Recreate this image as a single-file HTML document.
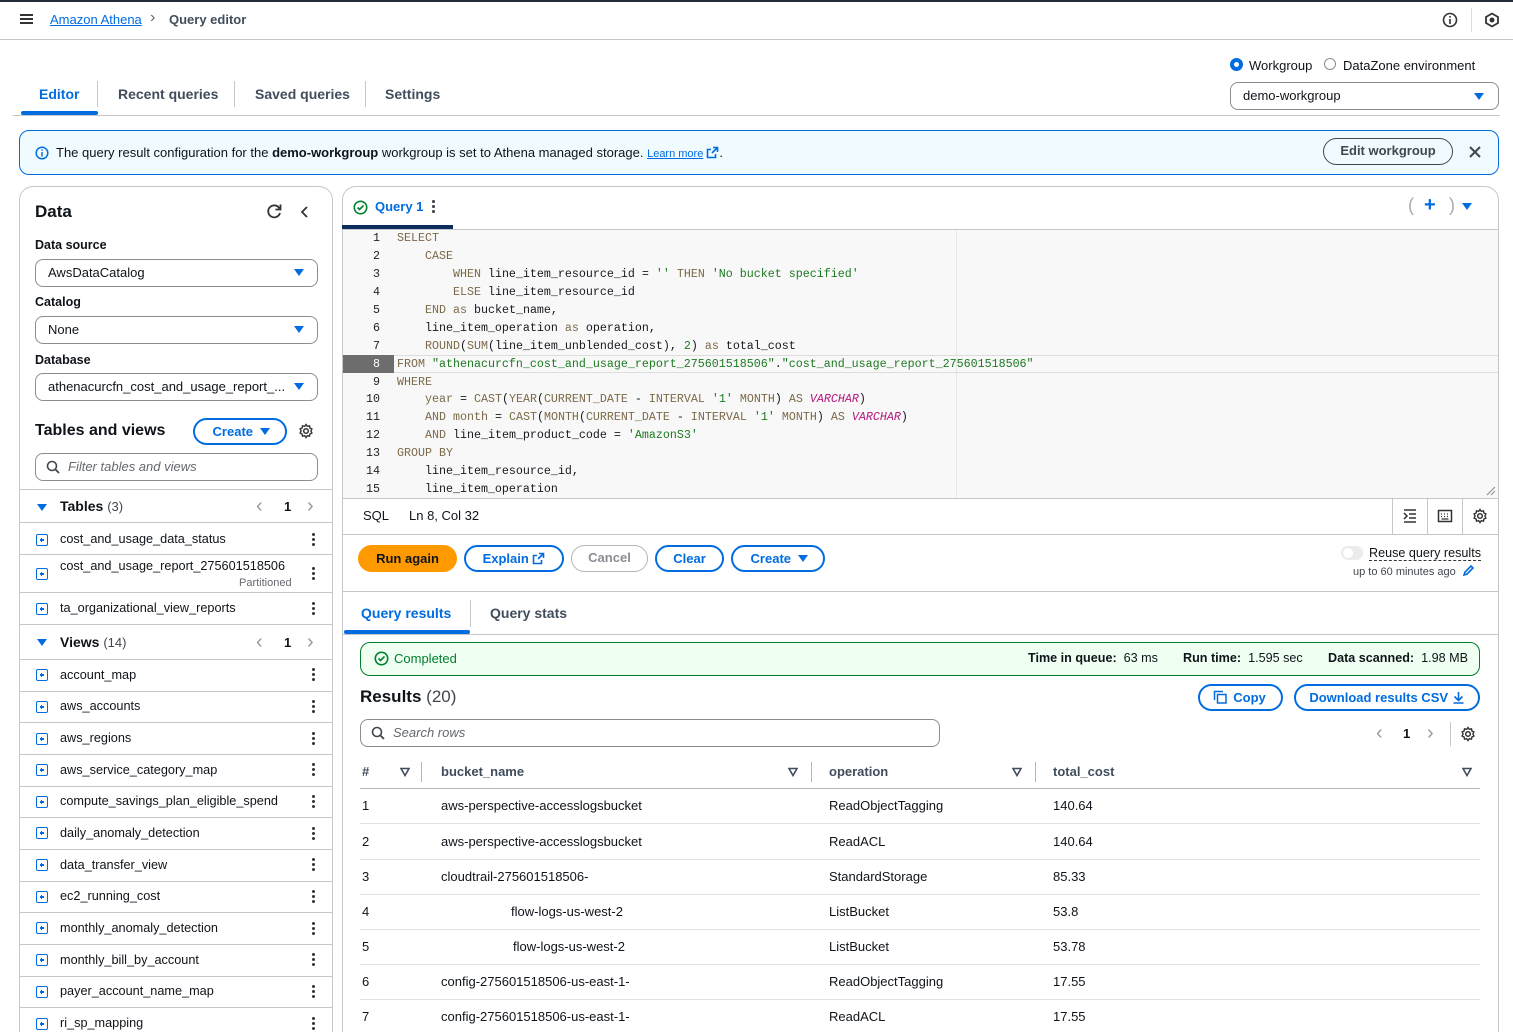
<!DOCTYPE html>
<html style="overflow:hidden;width:1513px;height:1032px"><head><meta charset="utf-8"><style>
*{box-sizing:border-box;margin:0;padding:0}
body{width:1513px;height:1032px;overflow:hidden;background:#fff;font-family:"Liberation Sans",sans-serif;font-size:13px;color:#0f141a;position:relative}
.a{position:absolute;white-space:nowrap}
.b{font-weight:bold}
.blue{color:#006ce0}
.sel{position:absolute;border:1px solid #8c8c94;border-radius:8px;background:#fff;height:28px;padding:0 12px;line-height:26px;font-size:13px}
.tri{position:absolute;width:0;height:0;border-left:5px solid transparent;border-right:5px solid transparent;border-top:7px solid #006ce0}
.btn{position:absolute;border:2px solid #006ce0;border-radius:20px;color:#006ce0;font-weight:bold;text-align:center;font-size:13px;background:#fff}
.hl{position:absolute;height:1px;background:#c6c6cd}
.vl{position:absolute;width:1px;background:#c6c6cd}
.code{position:absolute;left:397px;top:230px;font-family:"Liberation Mono",monospace;font-size:11.67px;line-height:17.93px;color:#16191f;white-space:pre}
.ln{position:absolute;left:344px;width:36px;top:230px;font-family:"Liberation Mono",monospace;font-size:11.67px;line-height:17.93px;text-align:right;white-space:pre;color:#222}
.k{color:#7b6a48}.s{color:#1d7a22}.v{color:#b5167a;font-style:italic}
.plus{position:absolute;left:36px;width:12px;height:12px;border:1.5px solid #006ce0;border-radius:2px}
.plus:before{content:"";position:absolute;left:2.5px;top:4.2px;width:4px;height:1.5px;background:#006ce0}
.plus:after{content:"";position:absolute;left:3.7px;top:3px;width:1.5px;height:4px;background:#006ce0}
.dots{position:absolute;left:312px;width:3px}
.dots i{display:block;width:3px;height:3px;border-radius:50%;background:#333;margin-bottom:2px}
.row{position:absolute;left:60px;font-size:12.7px}
.td{position:absolute;font-size:13px}
.pg{position:absolute;color:#9a9a9a;font-size:20px;line-height:20px}
</style></head><body>
<div class="a" style="left:0;top:0;width:1513px;height:2px;background:#232b37"></div>
<div class="a" style="left:20px;top:14px;width:13px;height:2px;background:#333;box-shadow:0 4px 0 #333,0 8px 0 #333"></div>
<div class="a blue" style="left:50px;top:12px;font-size:13px;text-decoration:underline">Amazon Athena</div>
<div class="a" style="left:150px;top:9px;color:#666;font-size:16px">›</div>
<div class="a" style="left:169px;top:12px;font-size:13px;font-weight:bold;color:#414d5c">Query editor</div>
<svg class="a" style="left:1442px;top:12px" width="16" height="16"><circle cx="8" cy="8" r="6.5" fill="none" stroke="#333" stroke-width="1.6"/><rect x="7.2" y="7" width="1.6" height="5" fill="#333"/><rect x="7.2" y="4" width="1.6" height="1.6" fill="#333"/></svg>
<div class="a" style="left:1471px;top:8px;width:1px;height:24px;background:#ddd"></div>
<svg class="a" style="left:1484px;top:12px" width="16" height="16"><polygon points="8,1.5 14,5 14,11 8,14.5 2,11 2,5" fill="none" stroke="#333" stroke-width="1.8"/><circle cx="8" cy="8" r="2.5" fill="#333"/></svg>
<div class="hl" style="left:0;top:39px;width:1513px"></div>
<div class="a b blue" style="left:39px;top:86px;font-size:14px">Editor</div>
<div class="a" style="left:21px;top:111px;width:77px;height:4px;background:#006ce0;border-radius:2px"></div>
<div class="vl" style="left:97px;top:81px;height:26px"></div>
<div class="a b" style="left:118px;top:86px;font-size:14px;color:#414d5c">Recent queries</div>
<div class="vl" style="left:234px;top:81px;height:26px"></div>
<div class="a b" style="left:255px;top:86px;font-size:14px;color:#414d5c">Saved queries</div>
<div class="vl" style="left:365px;top:81px;height:26px"></div>
<div class="a b" style="left:385px;top:86px;font-size:14px;color:#414d5c">Settings</div>
<div class="hl" style="left:13px;top:115px;width:1487px"></div>
<div class="a" style="left:1230px;top:58px;width:13px;height:13px;border-radius:50%;border:4px solid #006ce0"></div>
<div class="a" style="left:1249px;top:58px;font-size:13px">Workgroup</div>
<div class="a" style="left:1324px;top:58px;width:12px;height:12px;border-radius:50%;border:1.5px solid #8c8c94"></div>
<div class="a" style="left:1343px;top:58px;font-size:13px">DataZone environment</div>
<div class="sel" style="left:1230px;top:82px;width:269px">demo-workgroup</div>
<div class="tri" style="left:1474px;top:93px"></div>
<div class="a" style="left:19px;top:130px;width:1480px;height:45px;border:1px solid #006ce0;border-radius:10px;background:#f0fbff"></div>
<svg class="a" style="left:35px;top:146px" width="14" height="14"><circle cx="7" cy="7" r="5.8" fill="none" stroke="#006ce0" stroke-width="1.5"/><rect x="6.3" y="6" width="1.4" height="4.5" fill="#006ce0"/><rect x="6.3" y="3.3" width="1.4" height="1.4" fill="#006ce0"/></svg>
<div class="a" style="left:56px;top:145px;font-size:13px">The query result configuration for the <b>demo-workgroup</b> workgroup is set to Athena managed storage. <span class="blue" style="font-size:11px;text-decoration:underline">Learn more</span><svg width="13" height="13" style="vertical-align:-2px;margin-left:3px"><path d="M7 1.5h4.5V6M11.5 1.5L6 7M9.5 8v3.5h-8v-8H5" fill="none" stroke="#006ce0" stroke-width="1.6"/></svg>.</div>
<div class="a" style="left:1323px;top:138px;width:130px;height:27px;border:1.5px solid #424650;border-radius:14px;text-align:center;line-height:24px;font-weight:bold;color:#424650;font-size:13px">Edit workgroup</div>
<svg class="a" style="left:1468px;top:145px" width="14" height="14"><path d="M2 2L12 12M12 2L2 12" stroke="#424650" stroke-width="2"/></svg>
<div class="a" style="left:19px;top:186px;width:314px;height:880px;border:1px solid #c6c6cd;border-radius:14px"></div>
<div class="a b" style="left:35px;top:202px;font-size:17px">Data</div>
<svg class="a" style="left:266px;top:203px" width="17" height="17"><path d="M13.5 5.5A6 6 0 1 0 14 10" fill="none" stroke="#333" stroke-width="1.8"/><path d="M14.5 1.5v5h-5" fill="none" stroke="#333" stroke-width="1.8"/></svg>
<svg class="a" style="left:300px;top:205px" width="10" height="14"><path d="M7 2L2 7l5 5" fill="none" stroke="#333" stroke-width="1.8"/></svg>
<div class="a b" style="left:35px;top:238px;font-size:12.5px">Data source</div>
<div class="sel" style="left:35px;top:259px;width:283px">AwsDataCatalog</div><div class="tri" style="left:294px;top:269px"></div>
<div class="a b" style="left:35px;top:295px;font-size:12.5px">Catalog</div>
<div class="sel" style="left:35px;top:316px;width:283px">None</div><div class="tri" style="left:294px;top:326px"></div>
<div class="a b" style="left:35px;top:353px;font-size:12.5px">Database</div>
<div class="sel" style="left:35px;top:373px;width:283px">athenacurcfn_cost_and_usage_report_...</div><div class="tri" style="left:294px;top:383px"></div>
<div class="a b" style="left:35px;top:422px;font-size:16px">Tables and views</div>
<div class="btn" style="left:193px;top:418px;width:94px;height:27px;line-height:23px">Create&nbsp;&nbsp;&nbsp;&nbsp;</div><div class="tri" style="left:260px;top:428px"></div>
<svg class="a" style="left:298px;top:423px" width="16" height="16"><circle cx="8" cy="8" r="2.3" fill="none" stroke="#333" stroke-width="1.5"/><path d="M8 1.5l1.3 1.8 2.2-.5.4 2.2 2 1-1 2 1 2-2 1-.4 2.2-2.2-.5L8 14.5l-1.3-1.8-2.2.5-.4-2.2-2-1 1-2-1-2 2-1 .4-2.2 2.2.5z" fill="none" stroke="#333" stroke-width="1.4"/></svg>
<div class="sel" style="left:35px;top:453px;width:283px;padding-left:32px;font-style:italic;color:#656871">Filter tables and views</div>
<svg class="a" style="left:46px;top:460px" width="14" height="14"><circle cx="6" cy="6" r="4.5" fill="none" stroke="#424650" stroke-width="1.6"/><path d="M9.5 9.5L13 13" stroke="#424650" stroke-width="1.8"/></svg>
<div class="hl" style="left:20px;top:489px;width:312px"></div>
<div class="tri" style="left:37px;top:504px"></div>
<div class="a" style="left:60px;top:498px;font-size:14px"><b>Tables</b> <span style="color:#424650;font-size:13px">(3)</span></div>
<div class="pg" style="left:256px;top:496px">‹</div><div class="a b" style="left:284px;top:499px">1</div><div class="pg" style="left:307px;top:496px">›</div>
<div class="hl" style="left:20px;top:522px;width:312px"></div>
<div class="plus" style="top:534px"></div><div class="row" style="top:532px">cost_and_usage_data_status</div><div class="dots" style="top:533px"><i></i><i></i><i></i></div>
<div class="hl" style="left:20px;top:554px;width:312px"></div>
<div class="plus" style="top:568px"></div><div class="row" style="top:559px">cost_and_usage_report_275601518506</div><div class="a" style="left:239px;top:577px;font-size:11px;color:#656871">Partitioned</div><div class="dots" style="top:567px"><i></i><i></i><i></i></div>
<div class="hl" style="left:20px;top:592px;width:312px"></div>
<div class="plus" style="top:603px"></div><div class="row" style="top:601px">ta_organizational_view_reports</div><div class="dots" style="top:602px"><i></i><i></i><i></i></div>
<div class="hl" style="left:20px;top:624px;width:312px"></div>
<div class="tri" style="left:37px;top:639px"></div>
<div class="a" style="left:60px;top:634px;font-size:14px"><b>Views</b> <span style="color:#424650;font-size:13px">(14)</span></div>
<div class="pg" style="left:256px;top:632px">‹</div><div class="a b" style="left:284px;top:635px">1</div><div class="pg" style="left:307px;top:632px">›</div>
<div class="hl" style="left:20px;top:659px;width:312px"></div>
<div class="plus" style="top:669px"></div><div class="row" style="top:668px">account_map</div><div class="dots" style="top:668px"><i></i><i></i><i></i></div><div class="hl" style="left:20px;top:691px;width:312px"></div>
<div class="plus" style="top:701px"></div><div class="row" style="top:699px">aws_accounts</div><div class="dots" style="top:700px"><i></i><i></i><i></i></div><div class="hl" style="left:20px;top:722px;width:312px"></div>
<div class="plus" style="top:733px"></div><div class="row" style="top:731px">aws_regions</div><div class="dots" style="top:732px"><i></i><i></i><i></i></div><div class="hl" style="left:20px;top:754px;width:312px"></div>
<div class="plus" style="top:764px"></div><div class="row" style="top:763px">aws_service_category_map</div><div class="dots" style="top:763px"><i></i><i></i><i></i></div><div class="hl" style="left:20px;top:786px;width:312px"></div>
<div class="plus" style="top:796px"></div><div class="row" style="top:794px">compute_savings_plan_eligible_spend</div><div class="dots" style="top:795px"><i></i><i></i><i></i></div><div class="hl" style="left:20px;top:817px;width:312px"></div>
<div class="plus" style="top:827px"></div><div class="row" style="top:826px">daily_anomaly_detection</div><div class="dots" style="top:827px"><i></i><i></i><i></i></div><div class="hl" style="left:20px;top:849px;width:312px"></div>
<div class="plus" style="top:859px"></div><div class="row" style="top:858px">data_transfer_view</div><div class="dots" style="top:858px"><i></i><i></i><i></i></div><div class="hl" style="left:20px;top:881px;width:312px"></div>
<div class="plus" style="top:891px"></div><div class="row" style="top:889px">ec2_running_cost</div><div class="dots" style="top:890px"><i></i><i></i><i></i></div><div class="hl" style="left:20px;top:912px;width:312px"></div>
<div class="plus" style="top:922px"></div><div class="row" style="top:921px">monthly_anomaly_detection</div><div class="dots" style="top:922px"><i></i><i></i><i></i></div><div class="hl" style="left:20px;top:944px;width:312px"></div>
<div class="plus" style="top:954px"></div><div class="row" style="top:953px">monthly_bill_by_account</div><div class="dots" style="top:953px"><i></i><i></i><i></i></div><div class="hl" style="left:20px;top:976px;width:312px"></div>
<div class="plus" style="top:986px"></div><div class="row" style="top:984px">payer_account_name_map</div><div class="dots" style="top:985px"><i></i><i></i><i></i></div><div class="hl" style="left:20px;top:1007px;width:312px"></div>
<div class="plus" style="top:1018px"></div><div class="row" style="top:1016px">ri_sp_mapping</div><div class="dots" style="top:1017px"><i></i><i></i><i></i></div>
<div class="a" style="left:342px;top:186px;width:1157px;height:880px;border:1px solid #c6c6cd;border-radius:14px"></div>
<svg class="a" style="left:353px;top:200px" width="15" height="15"><circle cx="7.5" cy="7.5" r="6.2" fill="none" stroke="#00802f" stroke-width="1.6"/><path d="M4.5 7.5l2 2 4-4" fill="none" stroke="#00802f" stroke-width="1.6"/></svg>
<div class="a b blue" style="left:375px;top:199px;font-size:13px">Query 1</div>
<div class="a" style="left:432px;top:200px;width:3px"><i style="display:block;width:2.5px;height:2.5px;background:#424650;border-radius:50%;margin-bottom:2.5px"></i><i style="display:block;width:2.5px;height:2.5px;background:#424650;border-radius:50%;margin-bottom:2.5px"></i><i style="display:block;width:2.5px;height:2.5px;background:#424650;border-radius:50%"></i></div>
<div class="a" style="left:342px;top:225px;width:111px;height:4px;background:#0a2d5c"></div>
<div class="a" style="left:1408px;top:195px;color:#aaa;font-size:18px">(</div>
<div class="a b blue" style="left:1424px;top:194px;font-size:20px">+</div>
<div class="a" style="left:1449px;top:195px;color:#aaa;font-size:18px">)</div>
<div class="tri" style="left:1462px;top:203px"></div>
<div class="hl" style="left:343px;top:229px;width:1155px"></div>
<div class="a" style="left:343px;top:230px;width:1155px;height:268px;background:#f8f8f8"></div>
<div class="a" style="left:956px;top:230px;width:1px;height:268px;background:#e8e8e8"></div>
<div class="a" style="left:394px;top:355px;width:1104px;height:18px;border-top:1px solid #ddd;border-bottom:1px solid #ddd"></div>
<div class="a" style="left:343px;top:355px;width:51px;height:18px;background:#6d6d6d"></div>
<div class="ln">1
2
3
4
5
6
7
<span style="color:#fff">8</span>
9
10
11
12
13
14
15</div>
<div class="code"><span class="k">SELECT</span>
    <span class="k">CASE</span>
        <span class="k">WHEN</span> line_item_resource_id = <span class="s">''</span> <span class="k">THEN</span> <span class="s">'No bucket specified'</span>
        <span class="k">ELSE</span> line_item_resource_id
    <span class="k">END</span> <span class="k">as</span> bucket_name,
    line_item_operation <span class="k">as</span> operation,
    <span class="k">ROUND</span>(<span class="k">SUM</span>(line_item_unblended_cost), <span class="s">2</span>) <span class="k">as</span> total_cost
<span class="k">FROM</span> <span class="s">"athenacurcfn_cost_and_usage_report_275601518506"</span>.<span class="s">"cost_and_usage_report_275601518506"</span>
<span class="k">WHERE</span>
    <span class="k">year</span> = <span class="k">CAST</span>(<span class="k">YEAR</span>(<span class="k">CURRENT_DATE</span> - <span class="k">INTERVAL</span> <span class="s">'1'</span> <span class="k">MONTH</span>) <span class="k">AS</span> <span class="v">VARCHAR</span>)
    <span class="k">AND</span> <span class="k">month</span> = <span class="k">CAST</span>(<span class="k">MONTH</span>(<span class="k">CURRENT_DATE</span> - <span class="k">INTERVAL</span> <span class="s">'1'</span> <span class="k">MONTH</span>) <span class="k">AS</span> <span class="v">VARCHAR</span>)
    <span class="k">AND</span> line_item_product_code = <span class="s">'AmazonS3'</span>
<span class="k">GROUP BY</span>
    line_item_resource_id,
    line_item_operation</div>
<svg class="a" style="left:1484px;top:484px" width="12" height="12"><path d="M11 3L3 11M11 7L7 11" stroke="#888" stroke-width="1"/></svg>
<div class="hl" style="left:343px;top:498px;width:1155px"></div>
<div class="a" style="left:363px;top:508px;font-size:13px">SQL</div>
<div class="a" style="left:409px;top:508px;font-size:13px">Ln 8, Col 32</div>
<div class="vl" style="left:1392px;top:499px;height:35px"></div>
<div class="vl" style="left:1427px;top:499px;height:35px"></div>
<div class="vl" style="left:1462px;top:499px;height:35px"></div>
<svg class="a" style="left:1402px;top:508px" width="16" height="16"><path d="M2 2h12M7 6h7M7 10h7M2 14h12M2 5l3 3-3 3" fill="none" stroke="#333" stroke-width="1.5"/></svg>
<svg class="a" style="left:1437px;top:508px" width="16" height="16"><rect x="1.5" y="2.5" width="13" height="11" fill="none" stroke="#333" stroke-width="1.5"/><path d="M4 6h1M7 6h1M10 6h1M4 8.5h1M7 8.5h1M10 8.5h1M4.5 11h7" stroke="#333" stroke-width="1.3"/></svg>
<svg class="a" style="left:1472px;top:508px" width="16" height="16"><circle cx="8" cy="8" r="2.3" fill="none" stroke="#333" stroke-width="1.5"/><path d="M8 1.5l1.3 1.8 2.2-.5.4 2.2 2 1-1 2 1 2-2 1-.4 2.2-2.2-.5L8 14.5l-1.3-1.8-2.2.5-.4-2.2-2-1 1-2-1-2 2-1 .4-2.2 2.2.5z" fill="none" stroke="#333" stroke-width="1.4"/></svg>
<div class="hl" style="left:343px;top:534px;width:1155px"></div>
<div class="a b" style="left:358px;top:545px;width:99px;height:27px;border-radius:14px;background:#ff9900;text-align:center;line-height:27px;color:#0f141a">Run again</div>
<div class="btn" style="left:464px;top:545px;width:100px;height:27px;line-height:23px">Explain <svg width="13" height="13" style="vertical-align:-2px"><path d="M7 1.5h4.5V6M11.5 1.5L6 7M9.5 8v3.5h-8v-8H5" fill="none" stroke="#006ce0" stroke-width="1.6"/></svg></div>
<div class="btn" style="left:571px;top:545px;width:77px;height:27px;line-height:24px;border-color:#b4b4bb;color:#8c8c94;border-width:1.5px">Cancel</div>
<div class="btn" style="left:655px;top:545px;width:69px;height:27px;line-height:23px">Clear</div>
<div class="btn" style="left:731px;top:545px;width:94px;height:27px;line-height:23px">Create&nbsp;&nbsp;&nbsp;&nbsp;</div><div class="tri" style="left:798px;top:555px"></div>
<div class="a" style="left:1341px;top:546px;width:22px;height:14px;border-radius:7px;background:#e9ebed"></div>
<div class="a" style="left:1343px;top:548px;width:10px;height:10px;border-radius:50%;background:#fff"></div>
<div class="a" style="left:1369px;top:546px;font-size:12.6px;border-bottom:1px dashed #333">Reuse query results</div>
<div class="a" style="left:1353px;top:566px;font-size:11px;color:#424650">up to 60 minutes ago</div>
<svg class="a" style="left:1462px;top:564px" width="13" height="13"><path d="M2 11l1-3 6-6 2 2-6 6z" fill="none" stroke="#006ce0" stroke-width="1.6"/></svg>
<div class="hl" style="left:343px;top:591px;width:1155px"></div>
<div class="a b blue" style="left:361px;top:605px;font-size:14px">Query results</div>
<div class="a" style="left:344px;top:630px;width:126px;height:4px;background:#006ce0;border-radius:2px"></div>
<div class="vl" style="left:470px;top:600px;height:27px"></div>
<div class="a b" style="left:490px;top:605px;font-size:14px;color:#414d5c">Query stats</div>
<div class="hl" style="left:343px;top:634px;width:1155px"></div>
<div class="a" style="left:360px;top:642px;width:1120px;height:34px;border:1px solid #00802f;border-radius:10px;background:#effff1"></div>
<svg class="a" style="left:374px;top:651px" width="15" height="15"><circle cx="7.5" cy="7.5" r="6.2" fill="none" stroke="#00802f" stroke-width="1.6"/><path d="M4.5 7.5l2 2 4-4" fill="none" stroke="#00802f" stroke-width="1.6"/></svg>
<div class="a" style="left:394px;top:651px;color:#00802f;font-size:13px">Completed</div>
<div class="a" style="left:1028px;top:651px;font-size:12.6px"><b>Time in queue:</b>&nbsp; 63 ms</div>
<div class="a" style="left:1183px;top:651px;font-size:12.6px"><b>Run time:</b>&nbsp; 1.595 sec</div>
<div class="a" style="left:1328px;top:651px;font-size:12.6px"><b>Data scanned:</b>&nbsp; 1.98 MB</div>
<div class="a" style="left:360px;top:687px;font-size:17px"><b>Results</b> <span style="color:#424650">(20)</span></div>
<div class="btn" style="left:1198px;top:684px;width:85px;height:27px;line-height:23px">&nbsp;&nbsp;&nbsp;&nbsp;&nbsp;Copy</div>
<svg class="a" style="left:1213px;top:690px" width="14" height="14"><path d="M1.5 10V1.5H10" fill="none" stroke="#006ce0" stroke-width="1.5"/><rect x="4.5" y="4.5" width="8.5" height="8.5" fill="none" stroke="#006ce0" stroke-width="1.5"/></svg>
<div class="btn" style="left:1294px;top:684px;width:186px;height:27px;line-height:23px">Download results CSV <svg width="13" height="13" style="vertical-align:-2px"><path d="M6.5 1v8M2.5 5.5l4 4 4-4M1.5 12h10" fill="none" stroke="#006ce0" stroke-width="1.6"/></svg></div>
<div class="sel" style="left:360px;top:719px;width:580px;padding-left:32px;font-style:italic;color:#656871">Search rows</div>
<svg class="a" style="left:371px;top:726px" width="14" height="14"><circle cx="6" cy="6" r="4.5" fill="none" stroke="#424650" stroke-width="1.6"/><path d="M9.5 9.5L13 13" stroke="#424650" stroke-width="1.8"/></svg>
<div class="pg" style="left:1376px;top:723px">‹</div><div class="a b" style="left:1403px;top:726px">1</div><div class="pg" style="left:1427px;top:723px">›</div>
<div class="vl" style="left:1450px;top:722px;height:24px"></div>
<svg class="a" style="left:1460px;top:726px" width="16" height="16"><circle cx="8" cy="8" r="2.3" fill="none" stroke="#333" stroke-width="1.5"/><path d="M8 1.5l1.3 1.8 2.2-.5.4 2.2 2 1-1 2 1 2-2 1-.4 2.2-2.2-.5L8 14.5l-1.3-1.8-2.2.5-.4-2.2-2-1 1-2-1-2 2-1 .4-2.2 2.2.5z" fill="none" stroke="#333" stroke-width="1.4"/></svg>
<div class="td b" style="left:362px;top:764px;color:#414d5c">#</div>
<div class="td b" style="left:441px;top:764px;color:#414d5c">bucket_name</div>
<div class="td b" style="left:829px;top:764px;color:#414d5c">operation</div>
<div class="td b" style="left:1053px;top:764px;color:#414d5c">total_cost</div>
<svg class="a" style="left:400px;top:767px" width="10" height="10"><path d="M1 1.5h8L5 8.5z" fill="none" stroke="#414d5c" stroke-width="1.6"/></svg>
<svg class="a" style="left:788px;top:767px" width="10" height="10"><path d="M1 1.5h8L5 8.5z" fill="none" stroke="#414d5c" stroke-width="1.6"/></svg>
<svg class="a" style="left:1012px;top:767px" width="10" height="10"><path d="M1 1.5h8L5 8.5z" fill="none" stroke="#414d5c" stroke-width="1.6"/></svg>
<svg class="a" style="left:1462px;top:767px" width="10" height="10"><path d="M1 1.5h8L5 8.5z" fill="none" stroke="#414d5c" stroke-width="1.6"/></svg>
<div class="vl" style="left:421px;top:762px;height:20px;background:#b4b4bb"></div>
<div class="vl" style="left:811px;top:762px;height:20px;background:#b4b4bb"></div>
<div class="vl" style="left:1035px;top:762px;height:20px;background:#b4b4bb"></div>
<div class="hl" style="left:360px;top:788px;width:1120px;background:#b4b4bb"></div>
<div class="td" style="left:362px;top:798px">1</div><div class="td" style="left:441px;top:798px">aws-perspective-accesslogsbucket</div><div class="td" style="left:829px;top:798px">ReadObjectTagging</div><div class="td" style="left:1053px;top:798px">140.64</div>
<div class="hl" style="left:360px;top:823px;width:1120px;background:#e1e1e5"></div>
<div class="td" style="left:362px;top:834px">2</div><div class="td" style="left:441px;top:834px">aws-perspective-accesslogsbucket</div><div class="td" style="left:829px;top:834px">ReadACL</div><div class="td" style="left:1053px;top:834px">140.64</div>
<div class="hl" style="left:360px;top:859px;width:1120px;background:#e1e1e5"></div>
<div class="td" style="left:362px;top:869px">3</div><div class="td" style="left:441px;top:869px">cloudtrail-275601518506-</div><div class="td" style="left:829px;top:869px">StandardStorage</div><div class="td" style="left:1053px;top:869px">85.33</div>
<div class="hl" style="left:360px;top:894px;width:1120px;background:#e1e1e5"></div>
<div class="td" style="left:362px;top:904px">4</div><div class="td" style="left:511px;top:904px">flow-logs-us-west-2</div><div class="td" style="left:829px;top:904px">ListBucket</div><div class="td" style="left:1053px;top:904px">53.8</div>
<div class="hl" style="left:360px;top:929px;width:1120px;background:#e1e1e5"></div>
<div class="td" style="left:362px;top:939px">5</div><div class="td" style="left:513px;top:939px">flow-logs-us-west-2</div><div class="td" style="left:829px;top:939px">ListBucket</div><div class="td" style="left:1053px;top:939px">53.78</div>
<div class="hl" style="left:360px;top:964px;width:1120px;background:#e1e1e5"></div>
<div class="td" style="left:362px;top:974px">6</div><div class="td" style="left:441px;top:974px">config-275601518506-us-east-1-</div><div class="td" style="left:829px;top:974px">ReadObjectTagging</div><div class="td" style="left:1053px;top:974px">17.55</div>
<div class="hl" style="left:360px;top:999px;width:1120px;background:#e1e1e5"></div>
<div class="td" style="left:362px;top:1009px">7</div><div class="td" style="left:441px;top:1009px">config-275601518506-us-east-1-</div><div class="td" style="left:829px;top:1009px">ReadACL</div><div class="td" style="left:1053px;top:1009px">17.55</div>
</body></html>
